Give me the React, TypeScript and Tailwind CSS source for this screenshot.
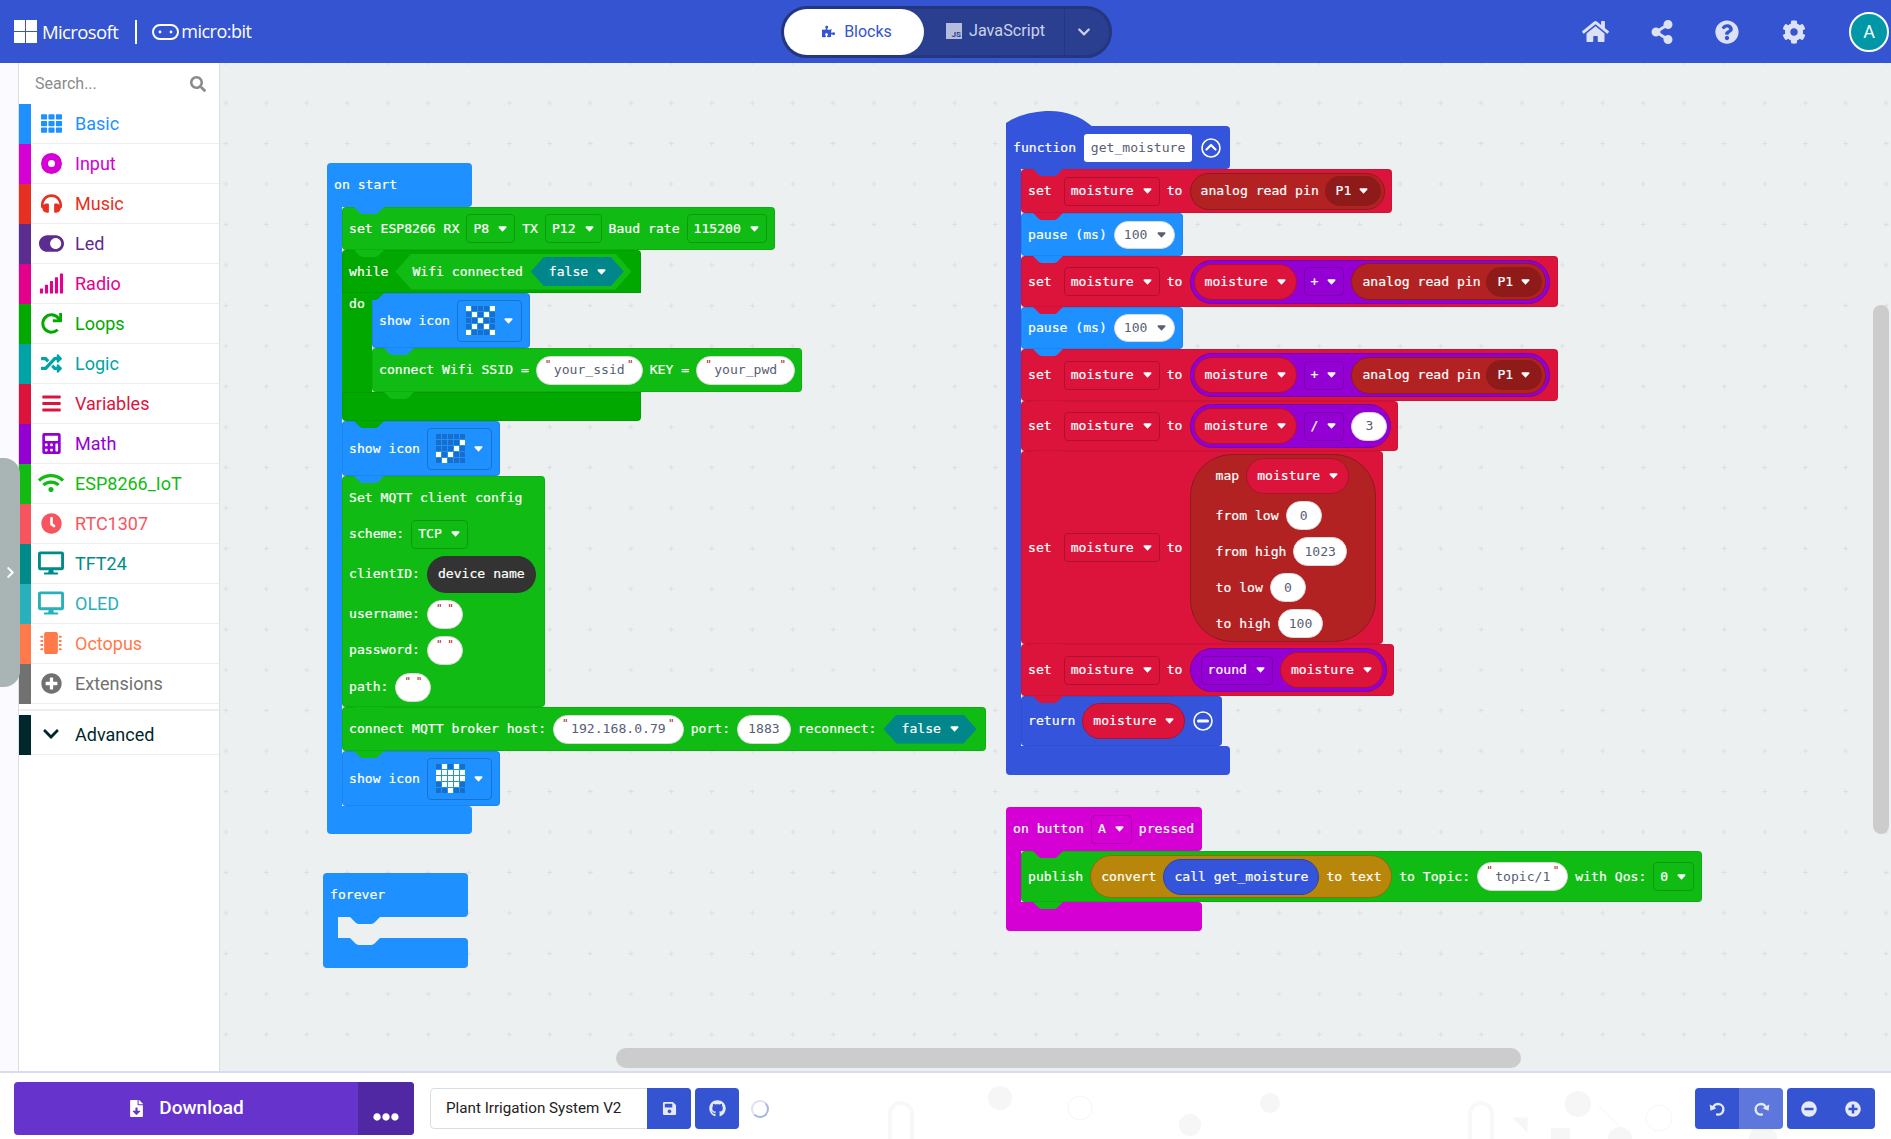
import React from 'react';
import {
  FaHome, FaShareAlt, FaQuestionCircle, FaCog, FaSearch, FaTh, FaHeadphones, FaToggleOn,
  FaSignal, FaRedo, FaRandom, FaBars, FaCalculator, FaWifi, FaClock, FaDesktop, FaMicrochip, FaPlusCircle,
  FaChevronDown, FaChevronRight, FaFileDownload, FaEllipsisH, FaSave, FaGithub, FaMinusCircle, FaPuzzlePiece,
} from 'react-icons/fa';

const tones = {
  blue: { bg: 'bg-[#1E90FF]', fill: 'fill-[#1E90FF]', dd: 'border-[#1873CC]' },
  fn: { bg: 'bg-[#3455DB]', fill: 'fill-[#3455DB]', dd: 'border-[#2A44AF]' },
  red: { bg: 'bg-[#DC143C]', fill: 'fill-[#DC143C]', dd: 'border-[#B01030]' },
  green: { bg: 'bg-[#10BC13]', fill: 'fill-[#10BC13]', dd: 'border-[#0D9A0F]' },
  dark: { bg: 'bg-[#00A800]', fill: 'fill-[#00A800]', dd: 'border-[#008800]' },
  pink: { bg: 'bg-[#D400D4]', fill: 'fill-[#D400D4]', dd: 'border-[#AA00AA]' },
  purple: { bg: 'bg-[#9400D3]', fill: 'fill-[#9400D3]', dd: 'border-[#7600A9]' },
};
type Tone = keyof typeof tones;

const Arrow = ({ className = 'fill-white' }: { className?: string }) => (
  <svg viewBox="0 0 10 7" className={`h-[6px] w-[9px] shrink-0 ${className}`}>
    <path d="M1.2 0.3H8.8Q10.2 0.5 9.4 2L5 6.6 0.6 2Q-0.2 0.5 1.2 0.3Z" />
  </svg>
);

const T = ({ children }: { children: React.ReactNode }) => (
  <span className="whitespace-pre text-white [-webkit-text-stroke:0.2px_white]">{children}</span>
);

const Tab = ({ tone, className = 'left-[12px]' }: { tone: Tone; className?: string }) => (
  <svg viewBox="0 0 30 7" className={`absolute top-full z-10 h-[7px] w-[30px] ${className} ${tones[tone].fill}`}>
    <path d="M0 0H30L24.5 5.6Q23 7 21.5 7H8.5Q7 7 5.5 5.6Z" />
  </svg>
);

const Block = ({ tone, className = '', tab = true, children }: { tone: Tone; className?: string; tab?: boolean; children: React.ReactNode }) => (
  <div className={`relative flex items-center gap-[7px] self-start rounded-[4px] pr-[8px] pl-[7px] shadow-[inset_0_0_0_1px_rgba(0,0,0,0.07)] ${tones[tone].bg} ${className}`}>
    {children}
    {tab && <Tab tone={tone} />}
  </div>
);

// square dropdown field
const Dd = ({ tone, label, className = '' }: { tone: Tone; label: string; className?: string }) => (
  <div className={`flex h-[29px] items-center gap-[9px] rounded-[4px] border pr-[7px] pl-[6px] ${tones[tone].dd} ${className}`}>
    <T>{label}</T>
    <Arrow />
  </div>
);

const Quotes = () => (
  <>
    <span className="absolute top-[2px] left-[8px] text-[11px] leading-[11px] text-[#A31515]">"</span>
    <span className="absolute top-[2px] right-[8px] text-[11px] leading-[11px] text-[#A31515]">"</span>
  </>
);

const Str = ({ value, className = 'px-[17px]' }: { value: string; className?: string }) => (
  <div className={`relative flex h-[29px] items-center justify-center rounded-full border border-[#d9d9d9] bg-white text-[#575E75] ${className}`}>
    <Quotes />
    <span className="whitespace-pre">{value}</span>
  </div>
);

const Num = ({ value }: { value: string }) => (
  <div className="flex h-[29px] min-w-[36px] items-center justify-center rounded-full border border-[#d9d9d9] bg-white px-[10px] text-[#575E75]">
    {value}
  </div>
);

const PauseVal = () => (
  <div className="flex h-[28px] w-[62px] items-center gap-[9px] rounded-full border border-[#d9d9d9] bg-white pl-[9px] text-[#575E75]">
    <span>100</span>
    <Arrow className="fill-[#575E75]" />
  </div>
);

const VarPill = ({ name = 'moisture' }: { name?: string }) => (
  <div className="flex h-[36px] w-[103px] shrink-0 items-center gap-[9px] rounded-full border border-[#B01030] bg-[#DC143C] pl-[10px]">
    <T>{name}</T>
    <Arrow />
  </div>
);

const Analog = () => (
  <div className="flex h-[37px] w-[195px] shrink-0 items-center justify-between rounded-full border border-[#8E1A1A] bg-[#B22222] pr-[3px] pl-[10px]">
    <T>analog read pin</T>
    <div className="flex h-[30px] w-[56px] items-center gap-[8px] rounded-full bg-[#8E1A1A] pl-[11px]">
      <T>P1</T>
      <Arrow />
    </div>
  </div>
);

const Hex = ({ className = 'bg-[#00868B]' }: { className?: string }) => (
  <div className={`flex h-[29px] w-[93px] shrink-0 items-center gap-[9px] pl-[18px] [clip-path:polygon(13px_0,80px_0,100%_50%,80px_100%,13px_100%,0_50%)] ${className}`}>
    <T>false</T>
    <Arrow />
  </div>
);

const Sum = ({ op, children }: { op: string; children: React.ReactNode }) => (
  <div className="flex h-[44px] shrink-0 items-center gap-[7px] rounded-full border border-[#7600A9] bg-[#9400D3] px-[3px]">
    <VarPill />
    <Dd tone="purple" label={op} />
    {children}
  </div>
);

const MATRIX: Record<string, number[]> = {
  cross: [0, 4, 6, 8, 12, 16, 18, 20, 24],
  check: [9, 13, 15, 17, 21],
  heart: [1, 3, 5, 6, 7, 8, 9, 10, 11, 12, 13, 14, 16, 17, 18, 22],
};

const ShowIcon = ({ pattern }: { pattern: string }) => (
  <Block tone="blue" className="h-[55px] w-[158px]">
    <T>show icon</T>
    <div className="flex h-[42px] w-[65px] items-center rounded-[4px] border border-[#1873CC] pl-[8px]">
      <div className="grid grid-cols-5 gap-[1px]">
        {Array.from({ length: 25 }).map((_, i) => (
          <div key={i} className={`h-[5px] w-[5px] ${MATRIX[pattern].includes(i) ? 'bg-white' : 'bg-[#186FCB]'}`} />
        ))}
      </div>
      <div className="ml-[9px]">
        <Arrow />
      </div>
    </div>
  </Block>
);

const SetHead = () => (
  <>
    <T>set</T>
    <Dd tone="red" label="moisture" className="ml-[5px]" />
    <T>to</T>
  </>
);

const Row = ({ className, children }: { className: string; children: React.ReactNode }) => (
  <div className={`flex items-center gap-[7px] ${className}`}>{children}</div>
);

const OnStart = () => (
  <div className="absolute top-[100px] left-[107px] w-max">
    <div className="relative flex h-[44px] w-[145px] items-center rounded-t-[4px] rounded-br-[4px] bg-[#1E90FF] px-[7px]">
      <T>on start</T>
      <Tab tone="blue" className="left-[27px]" />
    </div>
    <div className="flex">
      <div className="w-[15px] bg-[#1E90FF]" />
      <div className="flex flex-col">
        <Block tone="green" className="h-[43px] w-[433px]">
          <T>set ESP8266 RX</T>
          <Dd tone="green" label="P8" />
          <T>TX</T>
          <Dd tone="green" label="P12" />
          <T>Baud rate</T>
          <Dd tone="green" label="115200" />
        </Block>
        <div className="flex flex-col">
          <Block tone="dark" className="h-[43px] w-[299px] rounded-b-none">
            <T>while</T>
            <div className="flex h-[36px] w-[236px] shrink-0 items-center gap-[8px] bg-[#10BC13] pl-[17px] [clip-path:polygon(16px_0,220px_0,100%_50%,220px_100%,16px_100%,0_50%)]">
              <T>Wifi connected</T>
              <Hex />
            </div>
          </Block>
          <div className="flex">
            <div className="w-[30px] bg-[#00A800] pt-[1px] pl-[7px]">
              <T>do</T>
            </div>
            <div className="flex flex-col">
              <ShowIcon pattern="cross" />
              <Block tone="green" className="h-[44px] w-[430px]">
                <T>connect Wifi SSID =</T>
                <Str value="your_ssid" />
                <T>KEY =</T>
                <Str value="your_pwd" />
              </Block>
            </div>
          </div>
          <Block tone="dark" className="h-[29px] w-[299px] rounded-t-none">
            <span />
          </Block>
        </div>
        <ShowIcon pattern="check" />
        <div className="relative h-[231px] w-[203px] self-start rounded-[4px] bg-[#10BC13] pt-[4px] pr-[8px] pl-[7px] shadow-[inset_0_0_0_1px_rgba(0,0,0,0.07)]">
          <Row className="h-[36px]">
            <T>Set MQTT client config</T>
          </Row>
          <Row className="h-[36px]">
            <T>scheme:</T>
            <Dd tone="green" label="TCP" />
          </Row>
          <Row className="h-[44px]">
            <T>clientID:</T>
            <div className="flex h-[37px] items-center rounded-full bg-[#333333] px-[11px]">
              <T>device name</T>
            </div>
          </Row>
          <Row className="h-[36px]">
            <T>username:</T>
            <Str value="" className="w-[36px]" />
          </Row>
          <Row className="h-[36px]">
            <T>password:</T>
            <Str value="" className="w-[36px]" />
          </Row>
          <Row className="h-[38px]">
            <T>path:</T>
            <Str value="" className="w-[36px]" />
          </Row>
          <Tab tone="green" />
        </div>
        <Block tone="green" className="h-[44px] w-[644px]">
          <T>connect MQTT broker host:</T>
          <Str value="192.168.0.79" />
          <T>port:</T>
          <Num value="1883" />
          <T>reconnect:</T>
          <Hex />
        </Block>
        <ShowIcon pattern="heart" />
      </div>
    </div>
    <div className="h-[28px] w-[145px] rounded-b-[4px] rounded-tr-[4px] bg-[#1E90FF]" />
  </div>
);

const Forever = () => (
  <div className="absolute top-[810px] left-[103px] w-max">
    <div className="relative flex h-[44px] w-[145px] items-center rounded-t-[4px] rounded-br-[4px] bg-[#1E90FF] px-[7px]">
      <T>forever</T>
      <Tab tone="blue" className="left-[27px]" />
    </div>
    <div className="flex h-[21px]">
      <div className="w-[15px] bg-[#1E90FF]" />
    </div>
    <div className="relative h-[30px] w-[145px] rounded-b-[4px] rounded-tr-[4px] bg-[#1E90FF]">
      <svg viewBox="0 0 30 7" className="absolute top-0 left-[27px] h-[7px] w-[30px] fill-[#ECF0F1]">
        <path d="M0 0H30L24.5 5.6Q23 7 21.5 7H8.5Q7 7 5.5 5.6Z" />
      </svg>
    </div>
  </div>
);

const FunctionStack = () => (
  <div className="absolute top-[63px] left-[786px] w-max">
    <svg viewBox="0 0 87 16" className="absolute -top-[15px] left-0 h-[16px] w-[87px] fill-[#3455DB]">
      <path d="M0 16V12C12 4 28 0 44 0S74 5 87 16Z" />
    </svg>
    <div className="relative flex h-[43px] w-[224px] items-center gap-[7px] rounded-r-[4px] bg-[#3455DB] pl-[7px]">
      <T>function</T>
      <div className="ml-[1px] flex h-[28px] w-[108px] items-center justify-center rounded-[3px] bg-white text-[#575E75]">get_moisture</div>
      <svg viewBox="0 0 20 20" className="ml-[2px] h-[20px] w-[20px] fill-none stroke-white">
        <circle cx="10" cy="10" r="9" strokeWidth="1.6" />
        <path d="M5.5 11.5L10 7l4.5 4.5" strokeWidth="2.2" strokeLinecap="round" strokeLinejoin="round" />
      </svg>
      <Tab tone="fn" className="left-[27px]" />
    </div>
    <div className="flex">
      <div className="w-[15px] bg-[#3455DB]" />
      <div className="flex flex-col">
        <Block tone="red" className="h-[44px] w-[371px]">
          <SetHead />
          <Analog />
        </Block>
        <Block tone="blue" className="h-[43px] w-[162px]">
          <T>pause (ms)</T>
          <PauseVal />
        </Block>
        <Block tone="red" className="h-[51px] w-[537px]">
          <SetHead />
          <Sum op="+">
            <Analog />
          </Sum>
        </Block>
        <Block tone="blue" className="h-[42px] w-[162px]">
          <T>pause (ms)</T>
          <PauseVal />
        </Block>
        <Block tone="red" className="h-[52px] w-[537px]">
          <SetHead />
          <Sum op="+">
            <Analog />
          </Sum>
        </Block>
        <Block tone="red" className="h-[50px] w-[377px]">
          <SetHead />
          <Sum op="/">
            <Num value="3" />
          </Sum>
        </Block>
        <Block tone="red" className="h-[193px] w-[362px]">
          <SetHead />
          <div className="h-[188px] w-[186px] shrink-0 rounded-[42px] border border-[#8E1A1A] bg-[#B22222] pl-[25px]">
            <Row className="h-[43px]">
              <T>map</T>
              <VarPill />
            </Row>
            <Row className="h-[36px]">
              <T>from low</T>
              <Num value="0" />
            </Row>
            <Row className="h-[36px]">
              <T>from high</T>
              <Num value="1023" />
            </Row>
            <Row className="h-[36px]">
              <T>to low</T>
              <Num value="0" />
            </Row>
            <Row className="h-[36px]">
              <T>to high</T>
              <Num value="100" />
            </Row>
          </div>
        </Block>
        <Block tone="red" className="h-[52px] w-[373px]">
          <SetHead />
          <div className="flex h-[44px] w-[197px] shrink-0 items-center gap-[7px] rounded-full border border-[#7600A9] bg-[#9400D3] pl-[10px]">
            <Dd tone="purple" label="round" />
            <VarPill />
          </div>
        </Block>
        <Block tone="fn" tab={false} className="h-[50px] w-[201px]">
          <T>return</T>
          <VarPill />
          <svg viewBox="0 0 20 20" className="ml-[1px] h-[20px] w-[20px] fill-none stroke-white">
            <circle cx="10" cy="10" r="9" strokeWidth="1.6" />
            <path d="M5.5 10h9" strokeWidth="3" strokeLinecap="round" />
          </svg>
        </Block>
      </div>
    </div>
    <div className="h-[29px] w-[224px] rounded-b-[4px] rounded-tr-[4px] bg-[#3455DB]" />
  </div>
);

const ButtonStack = () => (
  <div className="absolute top-[744px] left-[786px] w-max">
    <div className="relative flex h-[44px] w-[196px] items-center gap-[7px] rounded-t-[4px] rounded-br-[4px] bg-[#D400D4] pl-[7px]">
      <T>on button</T>
      <Dd tone="pink" label="A" />
      <T>pressed</T>
      <Tab tone="pink" className="left-[27px]" />
    </div>
    <div className="flex">
      <div className="w-[15px] bg-[#D400D4]" />
      <Block tone="green" className="h-[51px] w-[681px]">
        <T>publish</T>
        <div className="flex h-[43px] w-[302px] shrink-0 items-center gap-[7px] rounded-full border border-[#93690A] bg-[#B8860B] pl-[10px]">
          <T>convert</T>
          <div className="flex h-[36px] items-center rounded-full border border-[#2A44AF] bg-[#3455DB] px-[10px]">
            <T>call get_moisture</T>
          </div>
          <T>to text</T>
        </div>
        <T>to Topic:</T>
        <Str value="topic/1" />
        <T>with Qos:</T>
        <Dd tone="green" label="0" />
      </Block>
    </div>
    <div className="h-[29px] w-[196px] rounded-b-[4px] rounded-tr-[4px] bg-[#D400D4]" />
  </div>
);

const categories = [
  { name: 'Basic', bar: 'bg-[#1E90FF]', text: 'text-[#1E90FF]', icon: <FaTh size={21} /> },
  {
    name: 'Input',
    bar: 'bg-[#D400D4]',
    text: 'text-[#D400D4]',
    icon: (
      <div className="flex h-[21px] w-[21px] items-center justify-center rounded-full bg-[#D400D4]">
        <div className="h-[7px] w-[7px] rounded-full bg-white" />
      </div>
    ),
  },
  { name: 'Music', bar: 'bg-[#E63022]', text: 'text-[#E63022]', icon: <FaHeadphones size={21} /> },
  { name: 'Led', bar: 'bg-[#5C2D91]', text: 'text-[#5C2D91]', icon: <FaToggleOn size={25} /> },
  { name: 'Radio', bar: 'bg-[#E3008C]', text: 'text-[#E3008C]', icon: <FaSignal size={25} /> },
  { name: 'Loops', bar: 'bg-[#00AA00]', text: 'text-[#00AA00]', icon: <FaRedo size={21} /> },
  { name: 'Logic', bar: 'bg-[#00A4A6]', text: 'text-[#00A4A6]', icon: <FaRandom size={21} /> },
  { name: 'Variables', bar: 'bg-[#DC143C]', text: 'text-[#DC143C]', icon: <FaBars size={21} /> },
  { name: 'Math', bar: 'bg-[#9400D3]', text: 'text-[#9400D3]', icon: <FaCalculator size={21} /> },
  { name: 'ESP8266_IoT', bar: 'bg-[#11BB11]', text: 'text-[#11BB11]', icon: <FaWifi size={26} /> },
  { name: 'RTC1307', bar: 'bg-[#F6555F]', text: 'text-[#F6555F]', icon: <FaClock size={21} /> },
  { name: 'TFT24', bar: 'bg-[#008B8B]', text: 'text-[#008B8B]', icon: <FaDesktop size={26} /> },
  { name: 'OLED', bar: 'bg-[#28B0BB]', text: 'text-[#28B0BB]', icon: <FaDesktop size={26} /> },
  { name: 'Octopus', bar: 'bg-[#FF7A4B]', text: 'text-[#FF7A4B]', icon: <FaMicrochip size={22} /> },
  { name: 'Extensions', bar: 'bg-[#717171]', text: 'text-[#717171]', icon: <FaPlusCircle size={21} /> },
];

const Header = () => (
  <header className="flex h-[63px] shrink-0 items-center bg-[#3454D1] font-['Open_Sans',sans-serif] text-white">
    <div className="flex w-[781px] items-center pl-[14px]">
      <div className="grid h-[23px] w-[23px] grid-cols-2 gap-[1px]">
        <div className="bg-white" />
        <div className="bg-white" />
        <div className="bg-white" />
        <div className="bg-white" />
      </div>
      <span className="ml-[5px] text-[18.5px] tracking-[-0.6px]">Microsoft</span>
      <div className="ml-[17px] h-[24px] w-[2px] bg-white" />
      <svg viewBox="0 0 27 16" className="ml-[15px] h-[16px] w-[27px] fill-white">
        <rect x="1" y="1" width="25" height="14" rx="7" fill="none" stroke="white" strokeWidth="2" />
        <circle cx="8" cy="8" r="1.4" />
        <circle cx="19" cy="8" r="1.4" />
      </svg>
      <span className="ml-[2px] text-[18px] tracking-[-0.5px]">micro:bit</span>
    </div>
    <div className="flex h-[52px] w-[331px] items-center rounded-full border-[3px] border-[#24367E] bg-[#2A3F8F] font-['Roboto',sans-serif]">
      <div className="flex h-[46px] w-[140px] items-center justify-center gap-[9px] rounded-full bg-white pl-[6px] text-[16px] text-[#3454D1]">
        <FaPuzzlePiece size={13} />
        Blocks
      </div>
      <div className="ml-[22px] flex items-center gap-[7px] text-[16.2px] text-[#CCD2ED]">
        <div className="relative h-[16px] w-[16px] bg-[#B5BDDD]">
          <span className="absolute right-[1px] bottom-0 text-[8px] leading-[9px] font-bold text-[#2A3F8F]">JS</span>
        </div>
        JavaScript
      </div>
      <div className="ml-[19px] flex h-full items-center border-l border-[#24367E] pl-[12px] text-[#CCD2ED]">
        <FaChevronDown size={14} />
      </div>
    </div>
    <div className="flex flex-1 items-center text-[#DDE1F6]">
      <FaHome size={27} className="ml-[470px]" />
      <FaShareAlt size={24} className="ml-[41px]" />
      <FaQuestionCircle size={24} className="ml-[41px]" />
      <FaCog size={24} className="ml-[43px]" />
      <div className="ml-[43px] flex h-[40px] w-[40px] items-center justify-center rounded-full border-2 border-white bg-[#0097A7] font-['Roboto',sans-serif] text-[18px] text-white">
        A
      </div>
    </div>
  </header>
);

const Toolbox = () => (
  <aside className="flex w-[201px] shrink-0 flex-col border-r border-[#DCDFE2] bg-white font-['Roboto',sans-serif]">
    <div className="flex h-[41px] items-center justify-between pr-[13px] pl-[16px] text-[16px] text-[#8B8B8B]">
      Search...
      <FaSearch size={16} className="text-[#8B8B8B]" />
    </div>
    {categories.map((c) => (
      <div key={c.name} className="flex h-[40px]">
        <div className={`w-[12px] ${c.bar}`} />
        <div className={`flex flex-1 items-center border-b border-[#EEEEEE] pb-[1px] text-[18px] ${c.text}`}>
          <div className="flex w-[40px] justify-center">{c.icon}</div>
          <span className="ml-[4px]">{c.name}</span>
        </div>
      </div>
    ))}
    <div className="mt-[5px] flex h-[46px] border-t-2 border-[#EEEEEE] pt-[4px]">
      <div className="w-[12px] bg-[#00272B]" />
      <div className="flex flex-1 items-center border-b border-[#EEEEEE] pb-[1px] text-[18px] text-[#00272B]">
        <div className="flex w-[40px] justify-center">
          <FaChevronDown size={18} />
        </div>
        <span className="ml-[4px]">Advanced</span>
      </div>
    </div>
  </aside>
);

const UndoIcon = ({ className = '' }: { className?: string }) => (
  <svg viewBox="0 0 24 24" className={`h-[17px] w-[17px] ${className}`}>
    <path d="M5.5 11.5a7.5 7.5 0 1 1 6 9" fill="none" stroke="currentColor" strokeWidth="3.4" strokeLinecap="round" />
    <path d="M1 6.5l1 8.5 8.5-3.5z" fill="currentColor" />
  </svg>
);

const Footer = () => (
  <footer className="relative flex h-[68px] shrink-0 items-center overflow-hidden border-t-2 border-[#D9DCEE] bg-white pt-[5px] pl-[14px] font-['Roboto',sans-serif]">
    <svg className="absolute inset-0 h-full w-full fill-[#F6F6F6]">
      <circle cx="1578" cy="31" r="13" />
      <circle cx="1659" cy="45" r="13" fill="none" stroke="#F6F6F6" />
      <circle cx="1000" cy="25" r="12" />
      <circle cx="1080" cy="35" r="12" fill="none" stroke="#F6F6F6" />
      <rect x="890" y="30" width="22" height="50" rx="11" fill="none" stroke="#F8F8F8" strokeWidth="4" />
      <rect x="1470" y="30" width="22" height="50" rx="11" fill="none" stroke="#F8F8F8" strokeWidth="4" />
      <path d="M1513 45h14v14zM1598 32l22 22" stroke="#F6F6F6" />
      <rect x="1551" y="55" width="19" height="12" />
      <circle cx="1620" cy="66" r="12" />
      <circle cx="1763" cy="66" r="14" />
      <circle cx="1270" cy="30" r="10" />
      <circle cx="1190" cy="52" r="11" />
    </svg>
    <div className="relative flex h-[53px] w-[400px] rounded-[4px] bg-[#6633CC] text-white">
      <div className="flex flex-1 items-center justify-center gap-[14px] text-[19px] font-medium">
        <FaFileDownload size={17} />
        Download
      </div>
      <div className="flex w-[56px] items-end justify-center rounded-r-[4px] bg-[#5128A3] pb-[10px]">
        <FaEllipsisH size={26} className="-mb-[5px]" />
      </div>
    </div>
    <div className="relative ml-[16px] flex h-[41px] w-[261px] rounded-[4px] border border-[#DDDDDD] bg-white">
      <div className="flex flex-1 items-center pl-[15px] text-[15.2px] text-[#222222]">Plant Irrigation System V2</div>
      <div className="-my-[1px] -mr-[1px] flex w-[44px] items-center justify-center rounded-r-[4px] bg-[#3454D1] text-[#E6E9F8]">
        <FaSave size={15} />
      </div>
    </div>
    <div className="relative ml-[4px] flex h-[41px] w-[44px] items-center justify-center rounded-[4px] bg-[#3454D1] text-[#E6E9F8]">
      <FaGithub size={17} />
    </div>
    <div className="relative ml-[12px] h-[18px] w-[18px] rounded-full border-2 border-[#DDE1F2] border-r-[#A8B4E4] border-b-[#A8B4E4]" />
    <div className="relative ml-auto flex gap-[4px] pr-[16px] text-[#E6E9F8]">
      <div className="flex h-[41px] w-[88px] overflow-hidden rounded-[4px]">
        <div className="flex flex-1 items-center justify-center bg-[#3454D1]">
          <UndoIcon />
        </div>
        <div className="flex flex-1 items-center justify-center bg-[#5D77DC]">
          <UndoIcon className="-scale-x-100" />
        </div>
      </div>
      <div className="flex h-[41px] w-[88px] rounded-[4px] bg-[#3454D1]">
        <div className="flex flex-1 items-center justify-center">
          <FaMinusCircle size={16} />
        </div>
        <div className="flex flex-1 items-center justify-center">
          <FaPlusCircle size={16} />
        </div>
      </div>
    </div>
  </footer>
);

export default function App() {
  return (
    <div className="flex h-[1139px] w-[1891px] flex-col overflow-hidden bg-white">
      <Header />
      <div className="relative flex min-h-0 flex-1">
        <div className="w-[19px] shrink-0 border-r border-[#DCDFE2] bg-[#FBFBFF]" />
        <Toolbox />
        <main className="relative flex-1 overflow-hidden bg-[#ECF0F1] font-['DejaVu_Sans_Mono',monospace] text-[13.1px]">
          <svg className="absolute inset-0 h-full w-full">
            <defs>
              <pattern id="grid" x="-14.45" y="19.75" width="40.5" height="40.5" patternUnits="userSpaceOnUse">
                <path d="M17.75 20.25h5M20.25 17.75v5" stroke="#DBDFE2" strokeWidth="1" fill="none" />
              </pattern>
            </defs>
            <rect width="100%" height="100%" fill="url(#grid)" />
          </svg>
          <OnStart />
          <Forever />
          <FunctionStack />
          <ButtonStack />
          <div className="absolute top-[242px] right-[2px] h-[529px] w-[16px] rounded-full bg-[#CCCCCC]" />
          <div className="absolute top-[985px] left-[396px] h-[20px] w-[905px] rounded-full bg-[#CCCCCC]" />
        </main>
        <div className="absolute top-[395px] left-0 flex h-[229px] w-[20px] items-center justify-center rounded-r-[16px] bg-[#A9B5B5] text-white">
          <FaChevronRight size={13} />
        </div>
      </div>
      <Footer />
    </div>
  );
}
